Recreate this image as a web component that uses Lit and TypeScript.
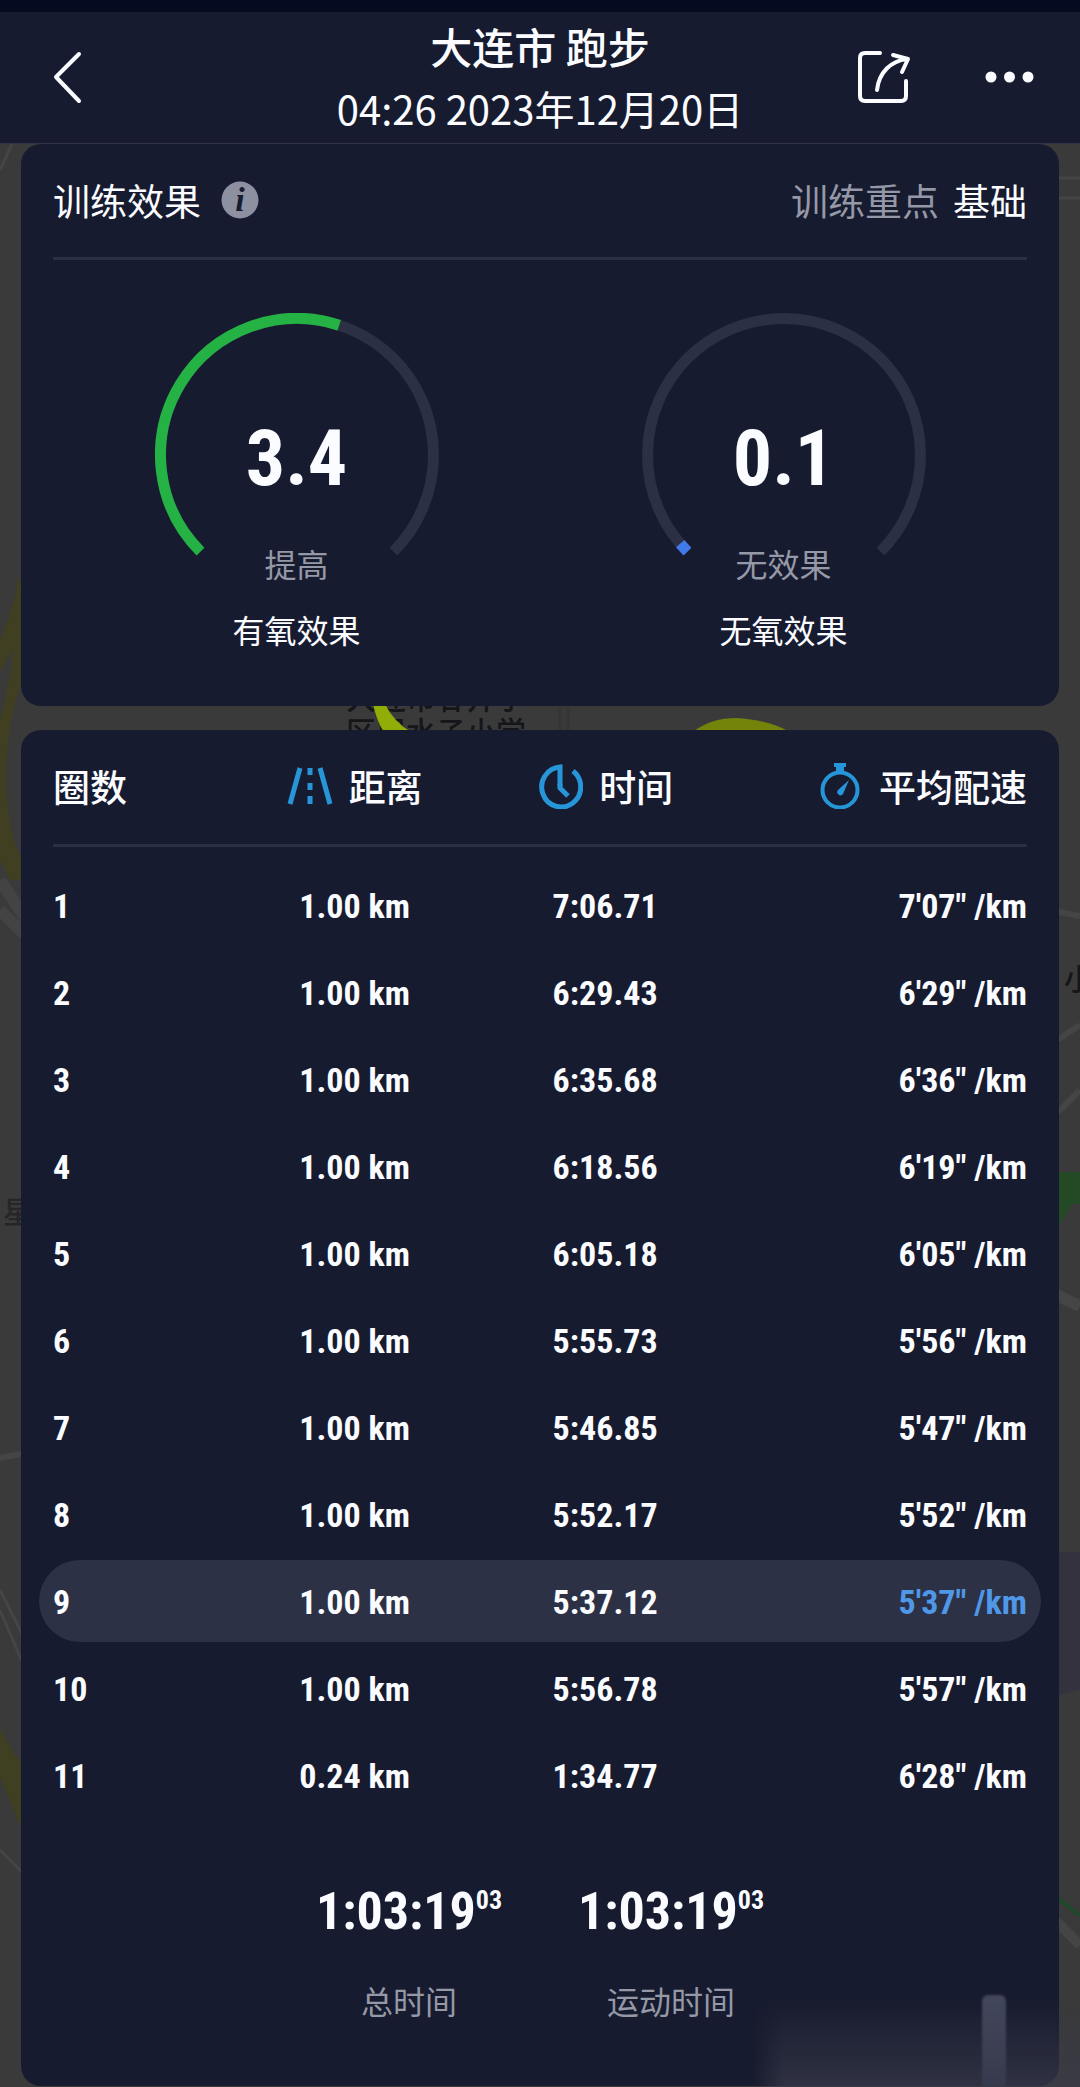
import { LitElement, html, css, svg } from "lit";
import { customElement, property } from "lit/decorators.js";

interface Lap {
  lap: number;
  distance: string;
  time: string;
  pace: string;
  best?: boolean;
}

const LAPS: Lap[] = [
  { lap: 1, distance: "1.00 km", time: "7:06.71", pace: "7'07\" /km" },
  { lap: 2, distance: "1.00 km", time: "6:29.43", pace: "6'29\" /km" },
  { lap: 3, distance: "1.00 km", time: "6:35.68", pace: "6'36\" /km" },
  { lap: 4, distance: "1.00 km", time: "6:18.56", pace: "6'19\" /km" },
  { lap: 5, distance: "1.00 km", time: "6:05.18", pace: "6'05\" /km" },
  { lap: 6, distance: "1.00 km", time: "5:55.73", pace: "5'56\" /km" },
  { lap: 7, distance: "1.00 km", time: "5:46.85", pace: "5'47\" /km" },
  { lap: 8, distance: "1.00 km", time: "5:52.17", pace: "5'52\" /km" },
  { lap: 9, distance: "1.00 km", time: "5:37.12", pace: "5'37\" /km", best: true },
  { lap: 10, distance: "1.00 km", time: "5:56.78", pace: "5'57\" /km" },
  { lap: 11, distance: "0.24 km", time: "1:34.77", pace: "6'28\" /km" },
];

const TOTALS = [
  { main: "1:03:19", hundredths: "03", label: "总时间" },
  { main: "1:03:19", hundredths: "03", label: "运动时间" },
];

const GAUGE_MAX = 6;

/* Point on the gauge ring, with 0 at the lower left end and 1 at the lower right end. */
function ringPoint(fraction: number): string {
  const angle = ((135 + 270 * fraction) * Math.PI) / 180;
  const x = 142 + 136.5 * Math.cos(angle);
  const y = 142 + 136.5 * Math.sin(angle);
  return `${x.toFixed(2)} ${y.toFixed(2)}`;
}

function ringArc(fraction: number): string {
  const large = fraction * 270 > 180 ? 1 : 0;
  return `M${ringPoint(0)} A136.5 136.5 0 ${large} 1 ${ringPoint(fraction)}`;
}

@customElement("effect-gauge")
export class EffectGauge extends LitElement {
  @property({ type: Number }) value = 0;
  @property() level = "";
  @property() caption = "";
  @property() tone = "green";

  static styles = css`
    :host {
      display: flex;
      flex-direction: column;
      align-items: center;
    }
    .dial {
      display: grid;
      width: 284px;
    }
    .ring,
    .readout {
      grid-area: 1 / 1;
    }
    .ring {
      display: block;
      width: 100%;
    }
    .track,
    .fill {
      fill: none;
      stroke-width: 11;
    }
    .track {
      stroke: #2b3044;
    }
    .fill.green {
      stroke: #25b244;
    }
    .fill.blue {
      stroke: #3f7ae8;
    }
    .readout {
      display: flex;
      flex-direction: column;
      align-items: center;
      gap: 42px;
      padding-top: 104px;
    }
    .value {
      font: 700 78px/84px "Roboto Condensed", "Liberation Sans Narrow", "Liberation Sans", sans-serif;
    }
    .level {
      font-size: 32px;
      line-height: 40px;
      color: #9598a6;
    }
    .caption {
      margin-top: 8px;
      font-size: 32px;
      line-height: 48px;
    }
  `;

  render() {
    return html`
      <div class="dial">
        <svg class="ring" viewBox="0 0 284 284" aria-hidden="true">
          <path class="track" d=${ringArc(1)} />
          <path class="fill ${this.tone}" d=${ringArc(this.value / GAUGE_MAX)} />
        </svg>
        <div class="readout">
          <span class="value">${this.value.toFixed(1)}</span>
          <span class="level">${this.level}</span>
        </div>
      </div>
      <div class="caption">${this.caption}</div>
    `;
  }
}

const mapShapes = svg`
  <g fill="none" stroke="#454545" stroke-width="3">
    <path d="M0 170 L12 144" />
    <path d="M1050 178 H1080 M1050 198 H1080" />
    <path d="M0 880 L30 925 M0 910 L30 940" stroke-width="12" stroke="#434343" />
    <path d="M0 1458 L30 1452" stroke-width="6" />
    <path d="M0 1590 L30 1650 M0 1610 L30 1680 M0 1850 L30 1880" />
    <path d="M560 700 V735 M568 700 V735" stroke="#353535" />
    <path d="M1050 1045 L1080 1025 M1050 1120 L1080 1090 M1050 910 L1080 916" stroke-width="6" />
    <path d="M1050 1292 L1080 1306" stroke-width="12" />
    <path d="M1050 1915 L1080 1945" stroke-width="10" />
  </g>
  <path d="M18 580 Q16 600 0 640 V672 L14 648 Q8 690 0 720 V860 L10 880 H22 V860 Q6 830 6 770 Q8 720 22 680 V580 Z" fill="#403f21" />
  <path d="M0 1728 Q14 1756 24 1766 V1832 Q8 1800 0 1776 Z" fill="#3f3f21" />
  <path d="M1050 1172 H1080 V1204 H1072 L1050 1240 V1204 Z" fill="#234a25" />
  <path d="M1050 1552 H1080 V1690 L1050 1697 Z" fill="#353240" />
  <path d="M1050 1892 L1080 1916" fill="none" stroke="#1e4a2b" stroke-width="4" />
  <g class="place">
    <text x="346" y="709">大连市甘井子</text>
    <text x="346" y="743">区周水子小学</text>
    <text x="3" y="1223" fill="#262626">星</text>
    <text x="1064" y="990">小</text>
  </g>
  <path d="M373 704 Q377 722 384 732 H411 Q394 722 385 704 Z" fill="#91ad08" />
  <path d="M694 731 Q712 718 736 718 Q768 720 788 731 Z" fill="#74830a" />
`;

const distanceIcon = html`
  <svg class="icon" width="46" height="46" viewBox="0 0 46 46" aria-hidden="true">
    <path d="M13 5 L3 41 M33 5 L43 41" stroke-width="5" />
    <path d="M23 5 V12 M23 20 V27 M23 33 V41" stroke-width="5" />
  </svg>
`;

const clockIcon = html`
  <svg class="icon" width="46" height="46" viewBox="0 0 46 46" aria-hidden="true">
    <path d="M23 23 V4 A19.5 20 0 1 0 36 8" stroke-width="5" />
    <path d="M23 21 V25 L31 33" stroke-width="5" />
  </svg>
`;

const stopwatchIcon = html`
  <svg class="icon" width="46" height="46" viewBox="0 0 46 46" aria-hidden="true">
    <circle cx="23" cy="27" r="17.5" stroke-width="4" />
    <path d="M17 2 H29" stroke-width="4" />
    <path d="M23 3 V10" stroke-width="8" />
    <path class="needle" d="M32 17 L26 31 A3 3 0 0 1 21 27 Z" />
  </svg>
`;

@customElement("app-root")
export class AppRoot extends LitElement {
  static styles = css`
    :host {
      display: block;
      position: relative;
      overflow: hidden;
      background: #3a3a3a;
      color: #fbfcff;
      font-family: "Noto Sans CJK SC", "Noto Sans", sans-serif;
    }
    .map {
      position: absolute;
      inset: 0;
      width: 100%;
      height: 100%;
    }
    .place {
      font-size: 30px;
      font-weight: 500;
      fill: #15161a;
    }
    .page {
      position: relative;
      padding-bottom: 1px;
    }
    .bar {
      display: grid;
      grid-template-columns: 1fr auto 1fr;
      align-items: center;
      padding: 3px 42px 4px;
      border-top: 12px solid #050a20;
      border-bottom: 1px solid #2f3344;
      background: #171b2f;
    }
    .heading {
      text-align: center;
    }
    .title {
      margin: 0;
      font-size: 42px;
      font-weight: 500;
      line-height: 62px;
    }
    .when {
      margin: 0;
      font-size: 40px;
      line-height: 62px;
    }
    .actions {
      display: flex;
      justify-content: flex-end;
      gap: 64px;
    }
    button {
      display: block;
      padding: 0;
      border: 0;
      background: none;
      color: inherit;
      font: inherit;
    }
    button svg {
      display: block;
    }
    .line {
      fill: none;
      stroke: currentColor;
      stroke-width: 4;
      stroke-linecap: round;
      stroke-linejoin: round;
    }
    .card {
      margin: 0 21px;
      border-radius: 20px;
      background: #171b2f;
    }
    .effects {
      margin-bottom: 24px;
      padding: 0 32px 53px;
    }
    .effects-head {
      display: flex;
      align-items: center;
      box-sizing: border-box;
      height: 116px;
      padding-bottom: 2px;
      border-bottom: 3px solid #2b3044;
      font-size: 37px;
    }
    .effects-title {
      margin: 0 20px 0 0;
      font-size: inherit;
      font-weight: 400;
    }
    .focus {
      display: flex;
      gap: 14px;
      margin-left: auto;
    }
    .muted {
      color: #9598a6;
    }
    .info-letter {
      font: italic 700 34px "Liberation Serif", serif;
      fill: #171b2f;
    }
    .gauges {
      display: grid;
      grid-template-columns: 1fr 1fr;
      padding-top: 53px;
    }
    .laps-card {
      padding: 0 18px 66px;
    }
    .laps {
      width: 100%;
      table-layout: fixed;
      border-collapse: separate;
      border-spacing: 0 5px;
    }
    .laps thead tr {
      background: linear-gradient(#2b3044, #2b3044) center bottom 12px / calc(100% - 28px) 3px no-repeat;
    }
    th {
      height: 124px;
      box-sizing: border-box;
      padding: 0 0 22px;
      font-size: 37px;
      font-weight: 500;
      line-height: 52px;
    }
    .label {
      display: flex;
      align-items: center;
      justify-content: center;
      gap: 16px;
    }
    .icon {
      flex: none;
      fill: none;
      stroke: #2796d9;
    }
    .needle {
      fill: #2796d9;
      stroke: none;
    }
    td {
      height: 82px;
      box-sizing: border-box;
      padding: 2px 0 0;
      text-align: center;
      font: 700 34px/40px "Roboto Condensed", "Liberation Sans Narrow", "Liberation Sans", sans-serif;
    }
    .c-lap {
      width: 19%;
      padding-left: 14px;
      text-align: left;
    }
    .c-mid {
      width: 25%;
    }
    .c-pace {
      padding-right: 14px;
      text-align: right;
    }
    .c-pace .label {
      justify-content: flex-end;
    }
    .best td {
      background: #2c3145;
    }
    .best .c-lap {
      border-radius: 41px 0 0 41px;
    }
    .best .c-pace {
      border-radius: 0 41px 41px 0;
      color: #4f98e8;
    }
    .totals {
      display: flex;
      justify-content: center;
      margin: 0;
      padding-top: 61px;
    }
    .total {
      display: flex;
      flex-direction: column-reverse;
      gap: 38px;
      width: 262px;
      text-align: center;
    }
    .total dt {
      color: #9598a6;
      font-size: 32px;
      line-height: 40px;
    }
    .total dd {
      display: flex;
      justify-content: center;
      margin: 0;
      font: 700 52px/60px "Roboto Condensed", "Liberation Sans Narrow", "Liberation Sans", sans-serif;
    }
    .hundredths {
      font-size: 26px;
      line-height: 36px;
    }
    .haze {
      position: absolute;
      right: 0;
      bottom: 0;
      width: 328px;
      height: 90px;
      background: linear-gradient(rgba(58, 60, 74, 0), rgba(58, 60, 74, 0.7));
      mask-image: linear-gradient(to right, transparent, #000 32px);
    }
    .stub {
      position: absolute;
      right: 74px;
      bottom: 0;
      width: 24px;
      height: 92px;
      border-radius: 6px 6px 0 0;
      background: linear-gradient(#43475c, #363a4d);
      filter: blur(1px);
    }
  `;

  private renderLap(lap: Lap) {
    return html`
      <tr class=${lap.best ? "best" : ""}>
        <td class="c-lap">${lap.lap}</td>
        <td>${lap.distance}</td>
        <td>${lap.time}</td>
        <td class="c-pace">${lap.pace}</td>
      </tr>
    `;
  }

  render() {
    return html`
      <svg class="map" viewBox="0 0 1080 2087" preserveAspectRatio="xMidYMin slice" aria-hidden="true">
        ${mapShapes}
      </svg>
      <div class="page">
        <header class="bar">
          <button type="button" aria-label="返回">
            <svg width="52" height="60" viewBox="0 0 52 60">
              <path class="line" d="M37 7 L14 30 L37 54" />
            </svg>
          </button>
          <div class="heading">
            <h1 class="title">大连市 跑步</h1>
            <p class="when">04:26 2023年12月20日</p>
          </div>
          <div class="actions">
            <button type="button" aria-label="分享">
              <svg width="60" height="60" viewBox="0 0 60 60">
                <path class="line" d="M26 6 H11 Q6 6 6 11 V49 Q6 54 11 54 H47 Q52 54 52 49 V34" />
                <path class="line" d="M23 43 C25 25 37 14 53 12 M39 8 L54 12 L48 25" />
              </svg>
            </button>
            <button type="button" aria-label="更多">
              <svg width="60" height="60" viewBox="0 0 60 60" fill="currentColor">
                <circle cx="13" cy="30" r="5.5" />
                <circle cx="31.5" cy="30" r="5.5" />
                <circle cx="50" cy="30" r="5.5" />
              </svg>
            </button>
          </div>
        </header>

        <main>
          <section class="card effects">
            <div class="effects-head">
              <h2 class="effects-title">训练效果</h2>
              <button type="button" aria-label="说明">
                <svg width="38" height="38" viewBox="0 0 38 38">
                  <circle cx="19" cy="19" r="18.5" fill="#8c90a1" />
                  <text class="info-letter" x="19" y="30" text-anchor="middle">i</text>
                </svg>
              </button>
              <div class="focus"><span class="muted">训练重点</span><span>基础</span></div>
            </div>
            <div class="gauges">
              <effect-gauge .value=${3.4} level="提高" caption="有氧效果" tone="green"></effect-gauge>
              <effect-gauge .value=${0.1} level="无效果" caption="无氧效果" tone="blue"></effect-gauge>
            </div>
          </section>

          <section class="card laps-card">
            <table class="laps">
              <thead>
                <tr>
                  <th class="c-lap" scope="col">圈数</th>
                  <th class="c-mid" scope="col"><div class="label">${distanceIcon}<span>距离</span></div></th>
                  <th class="c-mid" scope="col"><div class="label">${clockIcon}<span>时间</span></div></th>
                  <th class="c-pace" scope="col"><div class="label">${stopwatchIcon}<span>平均配速</span></div></th>
                </tr>
              </thead>
              <tbody>
                ${LAPS.map((lap) => this.renderLap(lap))}
              </tbody>
            </table>
            <dl class="totals">
              ${TOTALS.map(
                (total) => html`
                  <div class="total">
                    <dt>${total.label}</dt>
                    <dd>${total.main}<span class="hundredths">${total.hundredths}</span></dd>
                  </div>
                `
              )}
            </dl>
          </section>
        </main>
      </div>
      <div class="haze"></div>
      <div class="stub"></div>
    `;
  }
}
